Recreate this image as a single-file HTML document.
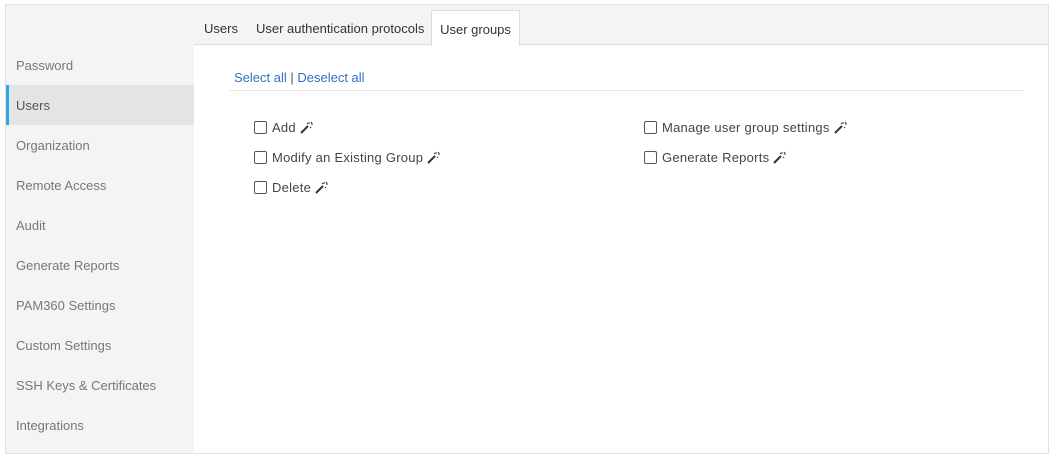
<!DOCTYPE html><html><head><style>
body{margin:0;width:1053px;height:457px;background:#fff;font-family:"Liberation Sans",sans-serif;font-size:13px;position:relative;overflow:hidden}
.frame{position:absolute;left:5px;top:4px;width:1042px;height:448px;border:1px solid #e2e2e2;background:#f4f4f4}
.side{position:absolute;left:0;top:40px;width:188px}
.side div{height:40px;line-height:42px;padding-left:10px;color:#777}
.side .act{background:#e4e4e4;border-left:3px solid #2ea7e8;padding-left:7px;color:#555}
.content{position:absolute;left:188px;top:39px;right:0;bottom:0;background:#fff;border-top:1px solid #ddd}
.tab{position:absolute;top:0;height:39px;line-height:48px;color:#333}
.tabact{position:absolute;left:425px;top:5px;width:87px;height:35px;background:#fff;border:1px solid #ddd;border-bottom:none;line-height:38px;text-align:center;color:#333;z-index:2}
a{color:#2f74c0;text-decoration:none}
.cb{position:absolute;color:#444;line-height:16px;letter-spacing:0.25px}
.cb i{display:inline-block;width:11px;height:11px;border:1px solid #555;border-radius:2px;vertical-align:-2px;margin-right:5px}
svg{vertical-align:-2px;margin-left:4px}
</style></head><body>
<div class="frame">
<div class="tab" style="left:198px">Users</div>
<div class="tab" style="left:250px">User authentication protocols</div>
<div class="tabact">User groups</div>
<div class="side">
<div>Password</div><div class="act">Users</div><div>Organization</div><div>Remote Access</div><div>Audit</div><div>Generate Reports</div><div>PAM360 Settings</div><div>Custom Settings</div><div>SSH Keys &amp; Certificates</div><div>Integrations</div>
</div>
<div class="content">
<div style="position:absolute;left:40px;top:25px;color:#555"><a>Select all</a> | <a>Deselect all</a></div>
<div style="position:absolute;left:35px;top:45px;width:795px;border-top:1px solid #e8e8e8"></div>
</div>
</div>
<div class="cb" style="left:254px;top:120px"><i></i>Add<svg width="13" height="13" viewBox="0 0 13 13"><path d="M1 12L8 5" stroke="#333" stroke-width="2"/><path d="M9 1v2M11 3h2M10 6l1 1M7 2l1 1M12 1l-1 1" stroke="#333" stroke-width="1"/></svg></div>
<div class="cb" style="left:254px;top:150px"><i></i>Modify an Existing Group<svg width="13" height="13" viewBox="0 0 13 13"><path d="M1 12L8 5" stroke="#333" stroke-width="2"/><path d="M9 1v2M11 3h2M10 6l1 1M7 2l1 1M12 1l-1 1" stroke="#333" stroke-width="1"/></svg></div>
<div class="cb" style="left:254px;top:180px"><i></i>Delete<svg width="13" height="13" viewBox="0 0 13 13"><path d="M1 12L8 5" stroke="#333" stroke-width="2"/><path d="M9 1v2M11 3h2M10 6l1 1M7 2l1 1M12 1l-1 1" stroke="#333" stroke-width="1"/></svg></div>
<div class="cb" style="left:644px;top:120px"><i></i>Manage user group settings<svg width="13" height="13" viewBox="0 0 13 13"><path d="M1 12L8 5" stroke="#333" stroke-width="2"/><path d="M9 1v2M11 3h2M10 6l1 1M7 2l1 1M12 1l-1 1" stroke="#333" stroke-width="1"/></svg></div>
<div class="cb" style="left:644px;top:150px"><i></i>Generate Reports<svg width="13" height="13" viewBox="0 0 13 13"><path d="M1 12L8 5" stroke="#333" stroke-width="2"/><path d="M9 1v2M11 3h2M10 6l1 1M7 2l1 1M12 1l-1 1" stroke="#333" stroke-width="1"/></svg></div>
</body></html>
